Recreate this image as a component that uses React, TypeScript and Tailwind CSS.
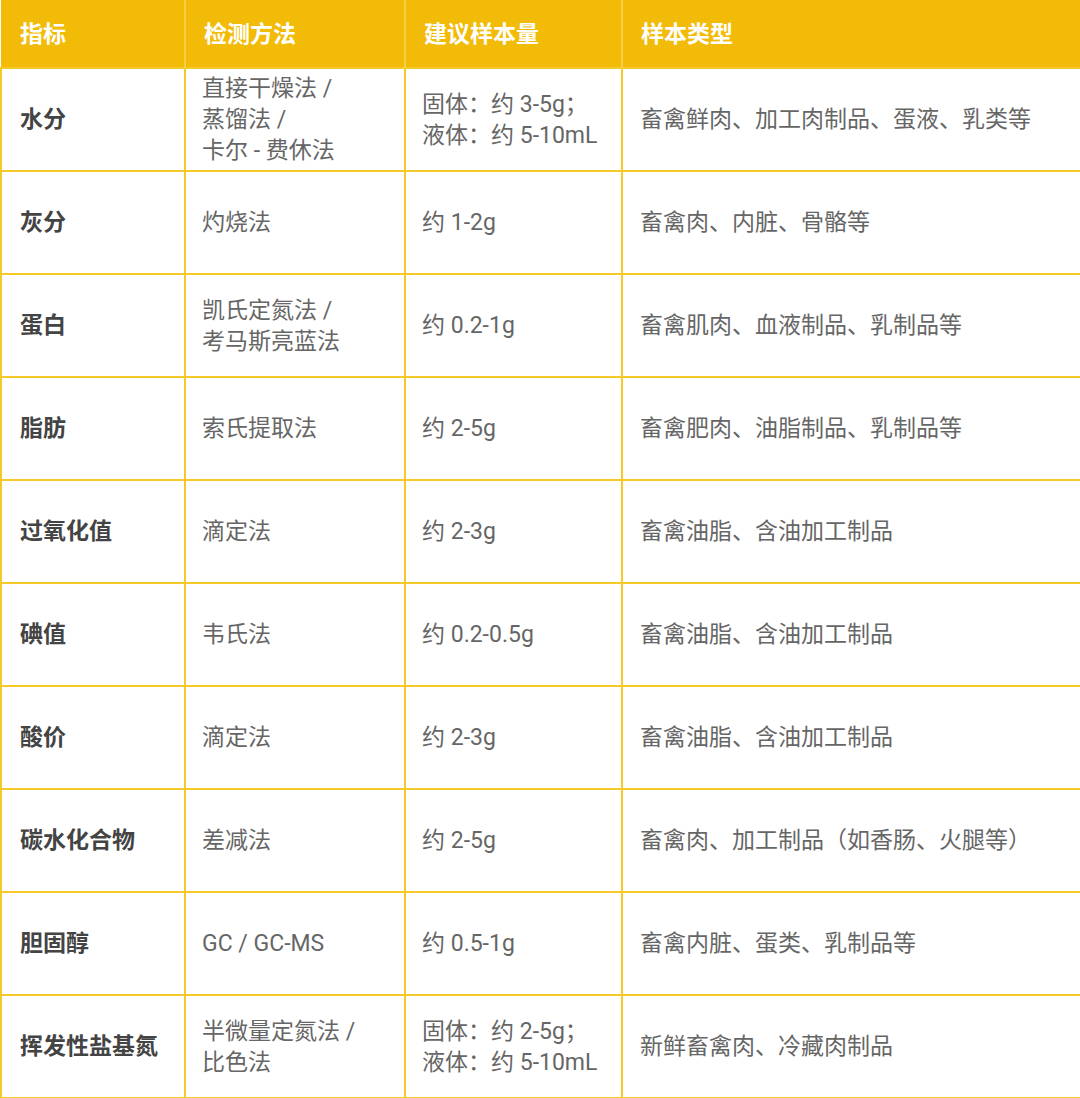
import React from "react"

const rows: { name: string; method: string[]; amount: string[]; sample: string }[] = [
  { name: "水分", method: ["直接干燥法 /", "蒸馏法 /", "卡尔 - 费休法"], amount: ["固体：约 3-5g；", "液体：约 5-10mL"], sample: "畜禽鲜肉、加工肉制品、蛋液、乳类等" },
  { name: "灰分", method: ["灼烧法"], amount: ["约 1-2g"], sample: "畜禽肉、内脏、骨骼等" },
  { name: "蛋白", method: ["凯氏定氮法 /", "考马斯亮蓝法"], amount: ["约 0.2-1g"], sample: "畜禽肌肉、血液制品、乳制品等" },
  { name: "脂肪", method: ["索氏提取法"], amount: ["约 2-5g"], sample: "畜禽肥肉、油脂制品、乳制品等" },
  { name: "过氧化值", method: ["滴定法"], amount: ["约 2-3g"], sample: "畜禽油脂、含油加工制品" },
  { name: "碘值", method: ["韦氏法"], amount: ["约 0.2-0.5g"], sample: "畜禽油脂、含油加工制品" },
  { name: "酸价", method: ["滴定法"], amount: ["约 2-3g"], sample: "畜禽油脂、含油加工制品" },
  { name: "碳水化合物", method: ["差减法"], amount: ["约 2-5g"], sample: "畜禽肉、加工制品（如香肠、火腿等）" },
  { name: "胆固醇", method: ["GC / GC-MS"], amount: ["约 0.5-1g"], sample: "畜禽内脏、蛋类、乳制品等" },
  { name: "挥发性盐基氮", method: ["半微量定氮法 /", "比色法"], amount: ["固体：约 2-5g；", "液体：约 5-10mL"], sample: "新鲜畜禽肉、冷藏肉制品" },
]

const font = { fontFamily: 'Roboto, "Noto Sans CJK SC", "Noto Sans", sans-serif' }

export default function App() {
  return (
    <div className="w-[1080px] h-[1098px] bg-white overflow-hidden" style={font}>
      <table className="w-[1080px] table-fixed border-collapse text-[23px] leading-[31px]">
        <colgroup>
          <col className="w-[184px]" />
          <col className="w-[220px]" />
          <col className="w-[217px]" />
          <col className="w-[459px]" />
        </colgroup>
        <thead>
          <tr className="h-[68px] bg-[#f2bb07] text-white font-bold text-left">
            <th className="pl-[19px] pt-[2px] border-r-2 border-[#f7cf45]">指标</th>
            <th className="pl-[18px] pt-[2px] border-r-2 border-[#f7cf45]">检测方法</th>
            <th className="pl-[18px] pt-[2px] border-r-2 border-[#f7cf45]">建议样本量</th>
            <th className="pl-[18px] pt-[2px]">样本类型</th>
          </tr>
        </thead>
        <tbody>
          {rows.map((r) => (
            <tr key={r.name} className="h-[103px]">
              <td className="border-2 border-[#f5c928] pl-[18px] font-bold text-[#444]">{r.name}</td>
              <td className="border-2 border-[#f5c928] pl-[16px] text-[#666]">
                {r.method.map((m) => (
                  <div key={m}>{m}</div>
                ))}
              </td>
              <td className="border-2 border-[#f5c928] pl-[16px] text-[#666]">
                {r.amount.map((a) => (
                  <div key={a}>{a}</div>
                ))}
              </td>
              <td className="border-2 border-[#f5c928] pl-[17px] text-[#666]">{r.sample}</td>
            </tr>
          ))}
        </tbody>
      </table>
    </div>
  )
}
